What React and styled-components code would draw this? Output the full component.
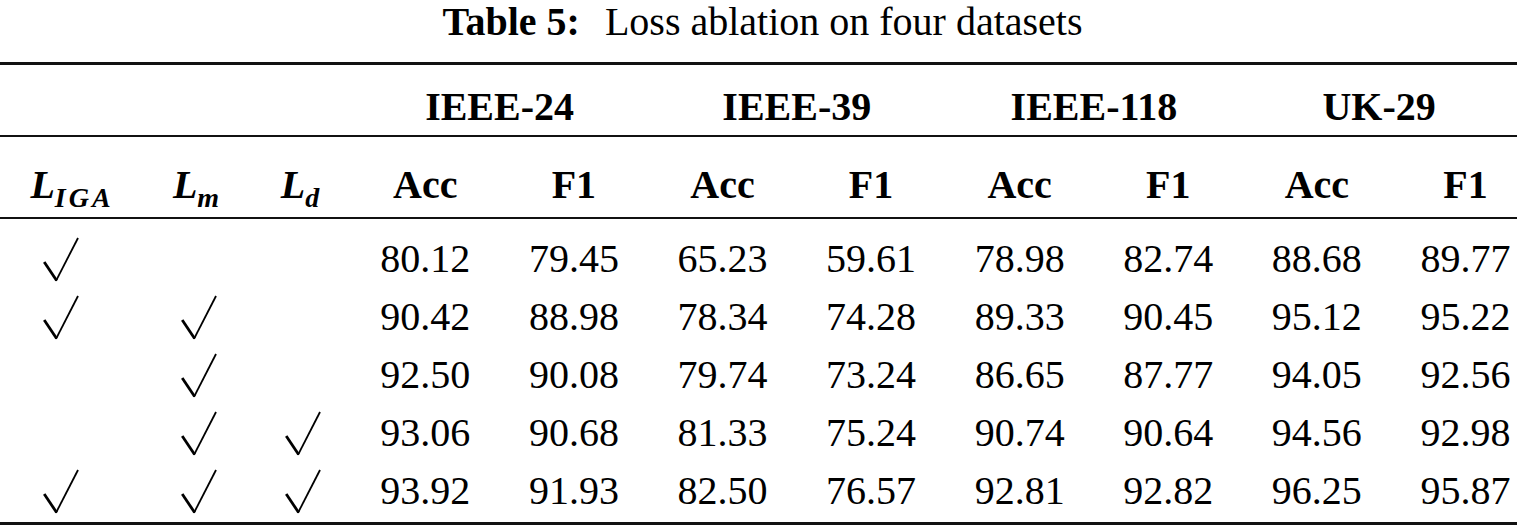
import React from "react";
import styled, { createGlobalStyle } from "styled-components";

const GlobalStyle = createGlobalStyle`
  html, body {
    margin: 0;
    padding: 0;
    background: #ffffff;
    overflow: hidden;
  }
`;

const COLS = "122px 154px 75px repeat(8, 148.6px)";

const Page = styled.div`
  width: 1517px;
  overflow: hidden;
  font-family: "Liberation Serif", "Times New Roman", serif;
  color: #000;
`;

const Caption = styled.div`
  text-align: center;
  font-size: 40px;
  line-height: 44px;
  margin-bottom: 18px;
  padding-left: 8px;
  white-space: nowrap;
  b {
    font-weight: 700;
    margin-right: 15px;
  }
`;

const Table = styled.div`
  width: 1540px;
  border-top: 3px solid #111;
`;

const Row = styled.div`
  display: grid;
  grid-template-columns: ${COLS};
  align-items: center;
  font-size: 40px;
`;

const GroupRow = styled(Row)`
  padding-top: 14px;
  height: 56px;
  line-height: 56px;
  border-bottom: 2px solid #111;
  font-weight: 700;
`;

const ColRow = styled(Row)`
  padding-top: 20px;
  height: 60px;
  line-height: 56px;
  align-items: start;
  border-bottom: 2px solid #111;
  font-weight: 700;
`;

const Body = styled.div`
  padding: 11px 0 2px;
  border-bottom: 3px solid #111;
`;

const DataRow = styled(Row)`
  height: 58px;
  line-height: 58px;
`;

const Cell = styled.div`
  grid-column: span ${(p) => p.$span || 1};
  display: flex;
  justify-content: center;
  padding-left: ${(p) => p.$pl || 0}px;
  padding-right: ${(p) => p.$pr || 0}px;
  white-space: nowrap;
`;

const Loss = styled.span`
  font-style: italic;
  font-weight: 700;
  sub {
    font-size: 28px;
    line-height: 0;
    vertical-align: -9px;
    letter-spacing: ${(p) => (p.$wide ? "3px" : "0")};
  }
`;

const Tick = () => (
  <svg width="36" height="45" viewBox="0 0 36 45" style={{ display: "block" }}>
    <path d="M1.2 25 L13.6 43.5" stroke="#000" strokeWidth="2.8" fill="none" />
    <path d="M13 43.8 L35 1" stroke="#000" strokeWidth="1.8" fill="none" />
  </svg>
);

const rows = [
  [[1, 0, 0], ["80.12", "79.45", "65.23", "59.61", "78.98", "82.74", "88.68", "89.77"]],
  [[1, 1, 0], ["90.42", "88.98", "78.34", "74.28", "89.33", "90.45", "95.12", "95.22"]],
  [[0, 1, 0], ["92.50", "90.08", "79.74", "73.24", "86.65", "87.77", "94.05", "92.56"]],
  [[0, 1, 1], ["93.06", "90.68", "81.33", "75.24", "90.74", "90.64", "94.56", "92.98"]],
  [[1, 1, 1], ["93.92", "91.93", "82.50", "76.57", "92.81", "92.82", "96.25", "95.87"]],
];

const groups = [
  { name: "IEEE-24", pr: 0 },
  { name: "IEEE-39", pr: 0 },
  { name: "IEEE-118", pr: 0 },
  { name: "UK-29", pr: 24 },
];
const markPad = [
  { pl: 0, pr: 0 },
  { pl: 0, pr: 0 },
  { pl: 0, pr: 21 },
];

export default function App() {
  return (
    <Page>
      <GlobalStyle />
      <Caption>
        <b>Table 5:</b> Loss ablation on four datasets
      </Caption>
      <Table>
        <GroupRow>
          <Cell $span={3} />
          {groups.map((g) => (
            <Cell key={g.name} $span={2} $pr={g.pr}>
              {g.name}
            </Cell>
          ))}
        </GroupRow>
        <ColRow>
          <Cell $pl={22}>
            <Loss $wide>
              L<sub>IGA</sub>
            </Loss>
          </Cell>
          <Cell $pr={6}>
            <Loss>
              L<sub>m</sub>
            </Loss>
          </Cell>
          <Cell $pr={27}>
            <Loss>
              L<sub>d</sub>
            </Loss>
          </Cell>
          {groups.map((g) => (
            <React.Fragment key={g.name}>
              <Cell>Acc</Cell>
              <Cell>F1</Cell>
            </React.Fragment>
          ))}
        </ColRow>
        <Body>
          {rows.map(([marks, vals], i) => (
            <DataRow key={i}>
              {marks.map((m, j) => (
                <Cell key={j} $pl={markPad[j].pl} $pr={markPad[j].pr}>
                  {m ? <Tick /> : null}
                </Cell>
              ))}
              {vals.map((v, k) => (
                <Cell key={k}>{v}</Cell>
              ))}
            </DataRow>
          ))}
        </Body>
      </Table>
    </Page>
  );
}
